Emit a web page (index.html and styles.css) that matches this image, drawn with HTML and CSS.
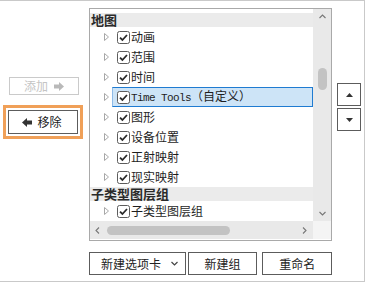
FILE: index.html
```html
<!DOCTYPE html>
<html>
<head>
<meta charset="utf-8">
<link rel="stylesheet" href="styles.css">
</head>
<body>
<div class="frame">
  <div class="leftcol">
    <button class="btn side disabled">添加<svg class="arr" width="10" height="9" viewBox="0 0 10 9"><rect x="0" y="2.5" width="5.5" height="4" fill="#b9b9b9"/><polygon points="5,0 10,4.5 5,9" fill="#b9b9b9"/></svg></button>
    <div class="focusring">
      <button class="btn side remove"><svg class="arr" width="10" height="9" viewBox="0 0 10 9"><polygon points="5,0 0,4.5 5,9" fill="#333"/><rect x="4.5" y="2.5" width="5.5" height="4" fill="#333"/></svg>移除</button>
    </div>
  </div>

  <div class="panel">
    <div class="viewport">
      <div class="group">地图</div>
      <div class="row"><svg class="exp" width="5" height="8" viewBox="0 0 5 8"><polygon points="0.5,0.5 4.5,4 0.5,7.5" fill="none" stroke="#a8a8a8"/></svg><span class="item"><svg class="cb" width="13" height="13" viewBox="0 0 13 13"><rect x="0.5" y="0.5" width="12" height="12" rx="2" fill="#fff" stroke="#5c5c5c"/><path d="M3 6.6 L5.4 9 L10 4" fill="none" stroke="#2b2b2b" stroke-width="1.8"/></svg><span class="lbl">动画</span></span></div>
      <div class="row"><svg class="exp" width="5" height="8" viewBox="0 0 5 8"><polygon points="0.5,0.5 4.5,4 0.5,7.5" fill="none" stroke="#a8a8a8"/></svg><span class="item"><svg class="cb" width="13" height="13" viewBox="0 0 13 13"><rect x="0.5" y="0.5" width="12" height="12" rx="2" fill="#fff" stroke="#5c5c5c"/><path d="M3 6.6 L5.4 9 L10 4" fill="none" stroke="#2b2b2b" stroke-width="1.8"/></svg><span class="lbl">范围</span></span></div>
      <div class="row"><svg class="exp" width="5" height="8" viewBox="0 0 5 8"><polygon points="0.5,0.5 4.5,4 0.5,7.5" fill="none" stroke="#a8a8a8"/></svg><span class="item"><svg class="cb" width="13" height="13" viewBox="0 0 13 13"><rect x="0.5" y="0.5" width="12" height="12" rx="2" fill="#fff" stroke="#5c5c5c"/><path d="M3 6.6 L5.4 9 L10 4" fill="none" stroke="#2b2b2b" stroke-width="1.8"/></svg><span class="lbl">时间</span></span></div>
      <div class="row"><svg class="exp" width="5" height="8" viewBox="0 0 5 8"><polygon points="0.5,0.5 4.5,4 0.5,7.5" fill="none" stroke="#a8a8a8"/></svg><span class="item selected"><svg class="cb" width="13" height="13" viewBox="0 0 13 13"><rect x="0.5" y="0.5" width="12" height="12" rx="2" fill="#fff" stroke="#5c5c5c"/><path d="M3 6.6 L5.4 9 L10 4" fill="none" stroke="#2b2b2b" stroke-width="1.8"/></svg><span class="lbl"><span class="mono">Time Tools</span>（自定义）</span></span></div>
      <div class="row"><svg class="exp" width="5" height="8" viewBox="0 0 5 8"><polygon points="0.5,0.5 4.5,4 0.5,7.5" fill="none" stroke="#a8a8a8"/></svg><span class="item"><svg class="cb" width="13" height="13" viewBox="0 0 13 13"><rect x="0.5" y="0.5" width="12" height="12" rx="2" fill="#fff" stroke="#5c5c5c"/><path d="M3 6.6 L5.4 9 L10 4" fill="none" stroke="#2b2b2b" stroke-width="1.8"/></svg><span class="lbl">图形</span></span></div>
      <div class="row"><svg class="exp" width="5" height="8" viewBox="0 0 5 8"><polygon points="0.5,0.5 4.5,4 0.5,7.5" fill="none" stroke="#a8a8a8"/></svg><span class="item"><svg class="cb" width="13" height="13" viewBox="0 0 13 13"><rect x="0.5" y="0.5" width="12" height="12" rx="2" fill="#fff" stroke="#5c5c5c"/><path d="M3 6.6 L5.4 9 L10 4" fill="none" stroke="#2b2b2b" stroke-width="1.8"/></svg><span class="lbl">设备位置</span></span></div>
      <div class="row"><svg class="exp" width="5" height="8" viewBox="0 0 5 8"><polygon points="0.5,0.5 4.5,4 0.5,7.5" fill="none" stroke="#a8a8a8"/></svg><span class="item"><svg class="cb" width="13" height="13" viewBox="0 0 13 13"><rect x="0.5" y="0.5" width="12" height="12" rx="2" fill="#fff" stroke="#5c5c5c"/><path d="M3 6.6 L5.4 9 L10 4" fill="none" stroke="#2b2b2b" stroke-width="1.8"/></svg><span class="lbl">正射映射</span></span></div>
      <div class="row"><svg class="exp" width="5" height="8" viewBox="0 0 5 8"><polygon points="0.5,0.5 4.5,4 0.5,7.5" fill="none" stroke="#a8a8a8"/></svg><span class="item"><svg class="cb" width="13" height="13" viewBox="0 0 13 13"><rect x="0.5" y="0.5" width="12" height="12" rx="2" fill="#fff" stroke="#5c5c5c"/><path d="M3 6.6 L5.4 9 L10 4" fill="none" stroke="#2b2b2b" stroke-width="1.8"/></svg><span class="lbl">现实映射</span></span></div>
      <div class="group">子类型图层组</div>
      <div class="row"><svg class="exp" width="5" height="8" viewBox="0 0 5 8"><polygon points="0.5,0.5 4.5,4 0.5,7.5" fill="none" stroke="#a8a8a8"/></svg><span class="item"><svg class="cb" width="13" height="13" viewBox="0 0 13 13"><rect x="0.5" y="0.5" width="12" height="12" rx="2" fill="#fff" stroke="#5c5c5c"/><path d="M3 6.6 L5.4 9 L10 4" fill="none" stroke="#2b2b2b" stroke-width="1.8"/></svg><span class="lbl">子类型图层组</span></span></div>
    </div>
    <div class="vscroll">
      <svg class="caret" width="7" height="5" viewBox="0 0 7 5"><path d="M0.5 4 L3.5 1 L6.5 4" fill="none" stroke="#777" stroke-width="1.1"/></svg>
      <div class="vthumb"></div>
      <svg class="caret caret-down" width="7" height="5" viewBox="0 0 7 5"><path d="M0.5 1 L3.5 4 L6.5 1" fill="none" stroke="#777" stroke-width="1.1"/></svg>
    </div>
    <div class="hscroll">
      <svg class="hcaret" width="5" height="7" viewBox="0 0 5 7"><path d="M4 0.5 L1 3.5 L4 6.5" fill="none" stroke="#777" stroke-width="1.1"/></svg>
      <div class="hthumb"></div>
      <svg class="hcaret hcaret-right" width="5" height="7" viewBox="0 0 5 7"><path d="M1 0.5 L4 3.5 L1 6.5" fill="none" stroke="#777" stroke-width="1.1"/></svg>
    </div>
    <div class="corner"></div>
  </div>

  <div class="rightcol">
    <button class="btn move"><svg width="7" height="4" viewBox="0 0 7 4"><polygon points="0,4 3.5,0 7,4" fill="#333"/></svg></button>
    <button class="btn move"><svg width="7" height="4" viewBox="0 0 7 4"><polygon points="0,0 3.5,4 7,0" fill="#333"/></svg></button>
  </div>

  <div class="bottombar">
    <button class="btn barbtn dropdown">新建选项卡<svg class="chev" width="7" height="5" viewBox="0 0 7 5"><path d="M0.5 1 L3.5 4 L6.5 1" fill="none" stroke="#444" stroke-width="1.2"/></svg></button>
    <button class="btn barbtn newgroup">新建组</button>
    <button class="btn barbtn">重命名</button>
  </div>
</div>
</body>
</html>
```

FILE: styles.css
```css
* { box-sizing: border-box; }
html, body { margin: 0; padding: 0; background: #fff; }
body {
  font-family: "Noto Sans CJK SC", "Liberation Sans", sans-serif;
  font-size: 12px;
  color: #222;
}
.frame {
  width: 365px;
  height: 282px;
  border-top: 1px solid #c9c9c9;
  border-right: 1px solid #c9c9c9;
  border-bottom: 1px solid #c9c9c9;
  padding-top: 7px;
  display: grid;
  grid-template-columns: 89px 243px 32px;
  grid-template-rows: 233px 23px;
  row-gap: 11px;
}
.btn {
  font-family: "Noto Sans CJK SC", "Liberation Sans", sans-serif;
  font-size: 12px;
  color: #222;
  background: #fff;
  border: 1px solid #5c5c5c;
  padding: 0;
  margin: 0;
  display: flex;
  align-items: center;
  justify-content: center;
  line-height: 16px;
}
.leftcol {
  display: flex;
  flex-direction: column;
  align-items: flex-start;
  padding-top: 69px;
  padding-left: 3px;
}
.side {
  width: 70px;
  gap: 6px;
}
.disabled {
  height: 18px;
  margin-left: 6px;
  margin-bottom: 10px;
  border-color: #cacaca;
  color: #c4c4c4;
}
.focusring {
  border: 3px solid #f0a058;
  padding: 2px;
}
.remove {
  height: 24px;
  gap: 5px;
  padding-right: 2px;
}
.arr { display: block; }

.panel {
  border: 1px solid #a9a9a9;
  display: grid;
  grid-template-columns: 223px 18px;
  grid-template-rows: 212px 18px;
}
.viewport {
  overflow: hidden;
  padding-top: 4px;
}
.group {
  height: 14px;
  line-height: 14px;
  background: #ebebeb;
  font-weight: bold;
  font-size: 13px;
  color: #2a2a2a;
  padding-left: 1px;
  white-space: nowrap;
}
.row {
  height: 20px;
  display: flex;
  align-items: center;
  padding-left: 14px;
}
.exp { display: block; margin-right: 3px; flex: none; }
.item {
  flex: 1;
  height: 20px;
  display: flex;
  align-items: center;
  border: 1px solid transparent;
  padding-left: 4px;
  white-space: nowrap;
  overflow: hidden;
}
.item.selected {
  background: #cde4f7;
  border-color: #1f7bd1;
  border-left-color: #8dbbe8;
}
.cb { display: block; flex: none; }
.lbl {
  margin-left: 1px;
  line-height: 18px;
  color: #1e1e1e;
}
.mono {
  font-family: "Liberation Mono", monospace;
  font-size: 11px;
  letter-spacing: -0.6px;
}
.vscroll {
  background: #e9e9e9;
  display: flex;
  flex-direction: column;
  align-items: center;
  padding-top: 5px;
}
.caret { display: block; flex: none; }
.caret-down { margin-top: auto; margin-bottom: 5px; }
.vthumb {
  width: 9px;
  height: 22px;
  margin-top: 49px;
  border-radius: 5px;
  background: #c3c3c3;
}
.hscroll {
  background: #e9e9e9;
  display: flex;
  align-items: center;
  padding-left: 5px;
}
.hcaret { display: block; flex: none; }
.hcaret-right { margin-left: auto; margin-right: 6px; }
.hthumb {
  width: 123px;
  height: 9px;
  margin-left: 7px;
  border-radius: 5px;
  background: #c3c3c3;
}
.corner { background: #f4f4f4; }

.rightcol {
  display: flex;
  flex-direction: column;
  padding-top: 75px;
  padding-left: 5px;
  gap: 2px;
}
.move {
  width: 24px;
  height: 23px;
}
.bottombar {
  grid-column: 2;
  display: flex;
  gap: 2px;
}
.barbtn {
  height: 23px;
  width: 70px;
}
.dropdown {
  width: 97px;
  justify-content: flex-start;
  padding-left: 11px;
}
.chev { margin-left: auto; margin-right: 7px; display: block; }
.newgroup { margin-right: 3px; }
```
